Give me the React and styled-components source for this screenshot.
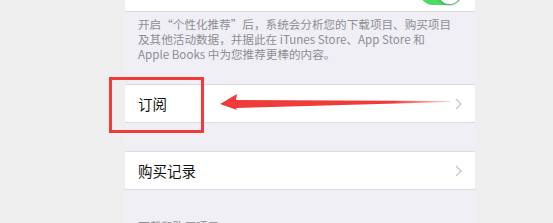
import React from 'react'
import styled, { createGlobalStyle } from 'styled-components'

const GlobalStyle = createGlobalStyle`
  html, body {
    margin: 0;
    padding: 0;
    background: #efefef;
    overflow: hidden;
  }
  body {
    font-family: "PingFang SC", "Noto Sans CJK SC", "Liberation Sans", sans-serif;
  }
`

const Page = styled.div`
  position: relative;
  width: 553px;
  height: 223px;
  overflow: hidden;
  background: #efefef;
`

const Panel = styled.div`
  margin-left: 125px;
  width: 350px;
  height: 260px;
  margin-top: -26px;
  background: #f0eff5;
  display: flex;
  flex-direction: column;
`

const Cell = styled.div`
  height: 37px;
  background: #fff;
  border-top: ${p => (p.$noTop ? 'none' : '1px solid #dcdce0')};
  border-bottom: 1px solid #dcdce0;
  display: flex;
  align-items: center;
  justify-content: space-between;
  padding: 0 13px 0 13px;
  margin-top: ${p => p.$gap || 0}px;
  font-size: 14.5px;
  color: #111;
`

const Label = styled.span`
  letter-spacing: 0;
`

const Toggle = styled.div`
  position: relative;
  width: 42px;
  height: 25px;
  border-radius: 13px;
  background: #4cd964;
  margin-right: 0;
  &::after {
    content: '';
    position: absolute;
    right: 1px;
    top: 1px;
    width: 23px;
    height: 23px;
    border-radius: 50%;
    background: #fff;
    box-shadow: 0 1px 3px rgba(0, 0, 0, 0.25);
  }
`

const Footer = styled.div`
  padding: 5px 18px 0 13px;
  font-size: 11.6px;
  line-height: 15px;
  color: #8e8e93;
`

const SectionHeader = styled.div`
  margin-top: 29px;
  padding-left: 13px;
  font-size: 11.6px;
  line-height: 15px;
  color: #8e8e93;
`

const Chevron = () => (
  <svg width="7" height="12" viewBox="0 0 7 12">
    <path d="M1 1 L6 6 L1 11" fill="none" stroke="#c7c7cc" strokeWidth="1.4" />
  </svg>
)

const Highlight = styled.div`
  position: absolute;
  left: 109px;
  top: 77px;
  width: 89px;
  height: 50px;
  border: 3px solid #f03b3b;
`

const Arrow = styled.svg`
  position: absolute;
  left: 218px;
  top: 92px;
`

export default function App() {
  return (
    <Page>
      <GlobalStyle />
      <Panel>
        <Cell $noTop>
          <span />
          <Toggle />
        </Cell>
        <Footer>
          开启“个性化推荐”后，系统会分析您的下载项目、购买项目及其他活动数据，并据此在 iTunes Store、App Store 和 Apple Books 中为您推荐更棒的内容。
        </Footer>
        <Cell $gap={22}>
          <Label>订阅</Label>
          <Chevron />
        </Cell>
        <Cell $gap={28}>
          <Label>购买记录</Label>
          <Chevron />
        </Cell>
        <SectionHeader>下载和购买项目</SectionHeader>
      </Panel>
      <Highlight />
      <Arrow width="240" height="20" viewBox="0 0 240 20">
        <defs>
          <linearGradient id="tail" x1="0" y1="0" x2="1" y2="0">
            <stop offset="0" stopColor="#f03b3b" />
            <stop offset="0.75" stopColor="#f03b3b" />
            <stop offset="1" stopColor="#f03b3b" stopOpacity="0.2" />
          </linearGradient>
        </defs>
        <path d="M2 12 L19 2 L18 8 L232 9 L232 10 L18 16 L19 18 Z" fill="url(#tail)" />
      </Arrow>
    </Page>
  )
}
